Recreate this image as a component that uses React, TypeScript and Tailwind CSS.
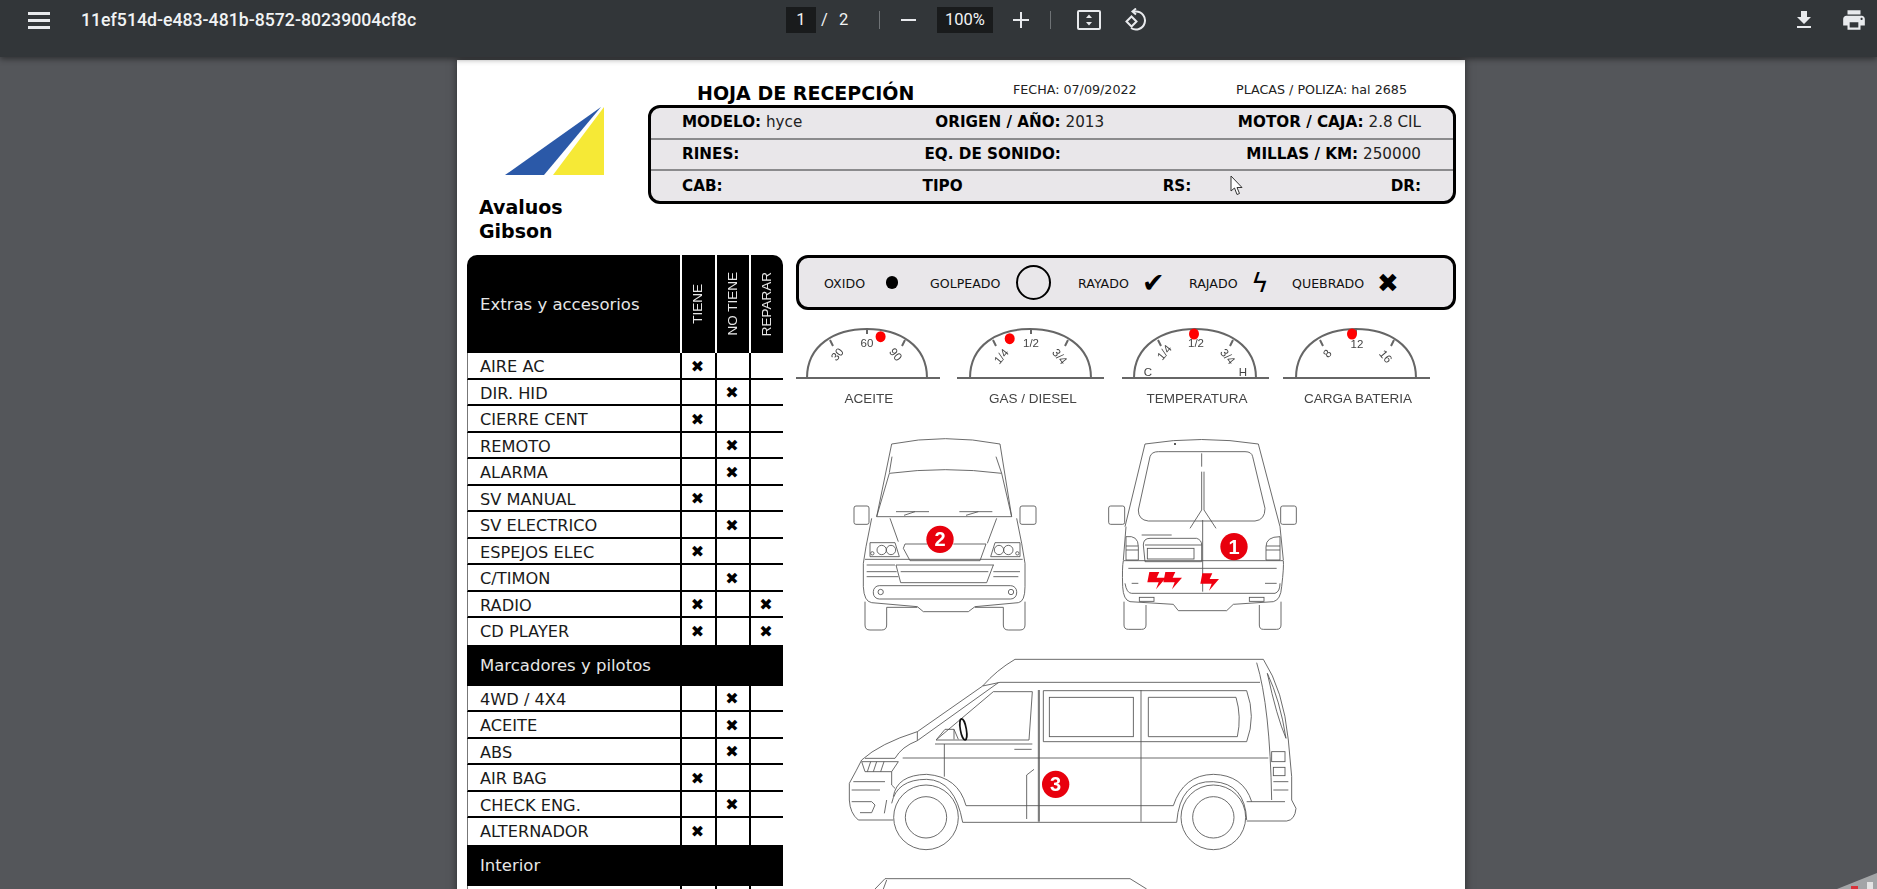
import React from 'react';

const DEJAVU = "font-['DejaVu_Sans',sans-serif]";

type Row = { name: string; marks: [boolean, boolean, boolean] };

const EXTRAS: Row[] = [
  { name: 'AIRE AC', marks: [true, false, false] },
  { name: 'DIR. HID', marks: [false, true, false] },
  { name: 'CIERRE CENT', marks: [true, false, false] },
  { name: 'REMOTO', marks: [false, true, false] },
  { name: 'ALARMA', marks: [false, true, false] },
  { name: 'SV MANUAL', marks: [true, false, false] },
  { name: 'SV ELECTRICO', marks: [false, true, false] },
  { name: 'ESPEJOS ELEC', marks: [true, false, false] },
  { name: 'C/TIMON', marks: [false, true, false] },
  { name: 'RADIO', marks: [true, false, true] },
  { name: 'CD PLAYER', marks: [true, false, true] },
];

const MARCADORES: Row[] = [
  { name: '4WD / 4X4', marks: [false, true, false] },
  { name: 'ACEITE', marks: [false, true, false] },
  { name: 'ABS', marks: [false, true, false] },
  { name: 'AIR BAG', marks: [true, false, false] },
  { name: 'CHECK ENG.', marks: [false, true, false] },
  { name: 'ALTERNADOR', marks: [true, false, false] },
];

const TableRow: React.FC<{ row: Row }> = ({ row }) => (
  <div className="grid grid-cols-[212px_35px_34px_34px] h-[26.5px] border-l border-[#777] border-b-2 border-b-black last:border-b-0">
    <div className="pl-[12px] text-[16.2px] leading-[27px] text-[#1a1a1a] whitespace-nowrap">{row.name}</div>
    {row.marks.map((on, i) => (
      <div key={i} className="border-l-2 border-black flex items-center justify-center pr-[2px] text-[16px] text-black">
        {on ? '✖' : ''}
      </div>
    ))}
  </div>
);

const Band: React.FC<{ title: string }> = ({ title }) => (
  <div className="h-[41px] bg-black pl-[13px] pt-[2px] flex items-center text-[16.5px] text-[#e6e6e6]">{title}</div>
);

const Toolbar: React.FC = () => (
  <div className="relative z-10 h-[57px] bg-[#323639] shadow-[0_2px_6px_rgba(0,0,0,0.45)] flex items-start pt-[7px] text-[#f1f3f4] font-['Roboto',sans-serif] text-[16.5px]">
    <div className="h-[26px] flex items-center ml-[28px] w-[53px]">
      <svg width="22" height="17" viewBox="0 0 22 17" fill="#e8eaed">
        <rect y="0" width="22" height="3" />
        <rect y="7" width="22" height="3" />
        <rect y="14" width="22" height="3" />
      </svg>
    </div>
    <div className="h-[26px] flex items-center w-[705px] text-[17.7px] font-medium whitespace-nowrap">11ef514d-e483-481b-8572-80239004cf8c</div>
    <div className="h-[26px] w-[30px] bg-[#191b1c] flex items-center justify-center">1</div>
    <div className="h-[26px] flex items-center ml-[5px] w-[18px]">/</div>
    <div className="h-[26px] flex items-center w-[40px]">2</div>
    <div className="h-[18px] w-px bg-[#6f7376] mt-[4px]" />
    <div className="h-[26px] flex items-center ml-[21px]">
      <div className="w-[15px] h-[2px] bg-[#e8eaed]" />
    </div>
    <div className="h-[26px] w-[56px] ml-[21px] bg-[#191b1c] flex items-center justify-center">100%</div>
    <div className="h-[26px] flex items-center ml-[20px]">
      <svg width="16" height="16" viewBox="0 0 16 16" fill="#e8eaed">
        <rect x="0" y="7" width="16" height="2" />
        <rect x="7" y="0" width="2" height="16" />
      </svg>
    </div>
    <div className="h-[18px] w-px bg-[#6f7376] mt-[4px] ml-[21px]" />
    <div className="h-[26px] flex items-center ml-[26px]">
      <svg width="24" height="20" viewBox="0 0 24 20" fill="none" stroke="#e8eaed" strokeWidth="2">
        <rect x="1" y="1" width="22" height="18" rx="1" />
        <path d="M12 4.5l3 3.5H9zM12 15.5l3-3.5H9z" fill="#e8eaed" stroke="none" />
      </svg>
    </div>
    <div className="h-[26px] flex items-center ml-[22px]">
      <svg width="24" height="24" viewBox="0 0 24 24" fill="none" stroke="#e8eaed" strokeWidth="2">
        <path d="M7.5 12.5l5-5 5 5-5 5z" transform="translate(-4 1)" />
        <path d="M10 3.5h3a9 9 0 1 1-5 16.5" />
        <path d="M13 0.5L9.5 3.5 13 6.5" />
      </svg>
    </div>
    <div className="h-[26px] flex items-center ml-[645px]">
      <svg width="24" height="26" viewBox="0 0 24 24" fill="#e8eaed">
        <path d="M19 9h-4V3H9v6H5l7 7 7-7zM5 18v2h14v-2H5z" />
      </svg>
    </div>
    <div className="h-[26px] flex items-center ml-[25px]">
      <svg width="26" height="26" viewBox="0 0 24 24" fill="#e8eaed">
        <path d="M19 8H5c-1.66 0-3 1.34-3 3v6h4v4h12v-4h4v-6c0-1.66-1.34-3-3-3zm-3 11H8v-5h8v5zm3-7c-.55 0-1-.45-1-1s.45-1 1-1 1 .45 1 1-.45 1-1 1zm-1-9H6v4h12V3z" />
      </svg>
    </div>
  </div>
);

const Label: React.FC<{ k: string; v?: string; className?: string }> = ({ k, v, className }) => (
  <span className={`whitespace-nowrap ${className ?? ''}`}>
    <b className="font-bold text-black">{k}</b>
    {v ? <span className="text-[#222]"> {v}</span> : null}
  </span>
);

const InfoBox: React.FC = () => (
  <div className="h-[99px] rounded-[12px] border-[3px] border-black bg-[#e9e7ea] text-[15.2px] flex flex-col overflow-hidden">
    <div className="flex-1 flex items-center pl-[31px] pr-[32px] border-b-2 border-[#8b8b8d]">
      <Label k="MODELO:" v="hyce" />
      <Label k="ORIGEN / AÑO:" v="2013" className="ml-[133px]" />
      <Label k="MOTOR / CAJA:" v="2.8 CIL" className="ml-auto" />
    </div>
    <div className="flex-1 flex items-center pl-[31px] pr-[32px] border-b-2 border-[#8b8b8d]">
      <Label k="RINES:" />
      <Label k="EQ. DE SONIDO:" className="ml-[185px]" />
      <Label k="MILLAS / KM:" v="250000" className="ml-auto" />
    </div>
    <div className="flex-1 flex items-center pl-[31px] pr-[32px]">
      <Label k="CAB:" />
      <Label k="TIPO" className="ml-[200px]" />
      <Label k="RS:" className="ml-[200px]" />
      <Label k="DR:" className="ml-auto" />
    </div>
  </div>
);

const Legend: React.FC = () => (
  <div className="h-[55px] rounded-[12px] border-[3px] border-black bg-[#e9e7ea] flex items-center pl-[25px] text-[12.6px] text-[#111]">
    <span className="w-[62px] pt-[3px]">OXIDO</span>
    <span className="w-[12px] h-[13px] rounded-full bg-black" />
    <span className="ml-[32px] w-[86px] pt-[3px]">GOLPEADO</span>
    <span className="w-[35px] h-[35px] rounded-full border-2 border-black" />
    <span className="ml-[27px] w-[64px] pt-[3px]">RAYADO</span>
    <span className="w-[47px] text-[27px] leading-none text-black">✔</span>
    <span className="w-[62px] pt-[3px]">RAJADO</span>
    <span className="w-[41px] text-[27px] leading-none text-black">ϟ</span>
    <span className="w-[85px] pt-[3px]">QUEBRADO</span>
    <span className="text-[26px] leading-none text-black">✖</span>
  </div>
);

const Tick: React.FC<{ x: number; y: number; t: string; r?: number }> = ({ x, y, t, r = 0 }) => (
  <text x={x} y={y} textAnchor="middle" dominantBaseline="middle" fontSize="11.5" fill="#444" transform={`rotate(${r} ${x} ${y})`}>
    {t}
  </text>
);

const Gauges: React.FC = () => (
  <svg width="660" height="90" viewBox="796 320 660 90" className="mt-[10px] font-['Liberation_Sans',sans-serif] blur-[0.5px]">
    <g fill="none" stroke="#666" strokeWidth="2">
      <path d="M794 378H940M807 378C807 345 835 329 867 329S927 345 927 378" />
      <path d="M957 378H1104M970 378C970 345 998 329 1030 329S1091 345 1091 378" />
      <path d="M1122 378H1269M1134 378C1134 345 1163 329 1195 329S1256 345 1256 378" />
      <path d="M1283 378H1430M1296 378C1296 345 1324 329 1356 329S1416 345 1416 378" />
      <path d="M830 340l3 6M867 329v5M905 340l-3 6M993 340l3 6M1031 329v5M1068 340l-3 6M1158 340l3 6M1195 329v5M1233 340l-3 6M1320 340l3 6M1356 329v5M1394 340l-3 6" />
    </g>
    <Tick x={838} y={355} t="30" r={-50} />
    <Tick x={867} y={344} t="60" />
    <Tick x={895} y={355} t="90" r={50} />
    <Tick x={1002} y={357} t="1/4" r={-50} />
    <Tick x={1031} y={344} t="1/2" />
    <Tick x={1059} y={357} t="3/4" r={50} />
    <Tick x={1165} y={353} t="1/4" r={-50} />
    <Tick x={1196} y={344} t="1/2" />
    <Tick x={1227} y={357} t="3/4" r={50} />
    <Tick x={1148} y={373} t="C" />
    <Tick x={1243} y={373} t="H" />
    <Tick x={1328} y={354} t="8" r={-50} />
    <Tick x={1357} y={345} t="12" />
    <Tick x={1385} y={357} t="16" r={50} />
    <g fontSize="13.5" fill="#444" textAnchor="middle">
      <text x={869} y={403}>ACEITE</text>
      <text x={1033} y={403}>GAS / DIESEL</text>
      <text x={1197} y={403}>TEMPERATURA</text>
      <text x={1358} y={403}>CARGA BATERIA</text>
    </g>
    <g fill="#f00">
      <ellipse cx={880.6} cy={336.7} rx={5} ry={5.5} />
      <ellipse cx={1009.7} cy={338.7} rx={5} ry={5.5} />
      <ellipse cx={1194} cy={334} rx={5} ry={5.5} />
      <ellipse cx={1352} cy={334} rx={5} ry={5.5} />
    </g>
  </svg>
);

const Badge: React.FC<{ x: number; y: number; n: string }> = ({ x, y, n }) => (
  <g>
    <circle cx={x} cy={y} r={41} fill="#e8000d" />
    <text x={x} y={y + 21} textAnchor="middle" fontSize="60" fontWeight="700" fill="#fff" fontFamily="Liberation Sans, sans-serif">
      {n}
    </text>
  </g>
);

const BOLT = 'M0 0H30L22 17H50L20 52L28 31H-6Z';

// coordinates are 3x the screen pixels, measured off the crops
const FrontBack: React.FC = () => (
  <svg width="500" height="220" viewBox="0 0 1500 660" className="mt-[10px] ml-[34px] blur-[0.3px]">
    <g fill="none" stroke="#555" strokeWidth="2.6">
      {/* front */}
      <path d="M140 290L185 72Q345 40 510 72L545 290" />
      <path d="M186 110L178 158M498 110L515 160" />
      <path d="M140 290L178 160Q345 138 515 160L545 290Z" />
      <path d="M198 275H297M222 286L255 275M388 275H487M408 286L445 275" />
      <rect x="72" y="258" width="45" height="55" rx="6" />
      <rect x="570" y="258" width="48" height="55" rx="6" />
      <path d="M125 295L108 380L100 430M560 295L575 370L585 430" />
      <path d="M180 295L205 365M500 295L472 370" />
      <path d="M225 372L220 385L240 422H450L468 372M225 372H292M370 372H468" />
      <path d="M120 368H195L208 410H120Z" />
      <path d="M570 368H495L482 410H570Z" />
      <circle cx="155" cy="390" r="14" />
      <circle cx="183" cy="390" r="14" />
      <circle cx="127" cy="400" r="5" />
      <circle cx="507" cy="390" r="14" />
      <circle cx="535" cy="390" r="14" />
      <circle cx="562" cy="400" r="5" />
      <path d="M105 418H578M110 435H195M110 455H200M110 470H205M198 435H492M198 435L212 488H470L490 435M212 455H475M490 455H570M490 470H565" />
      <path d="M100 430V500Q102 545 125 548L262 560L280 575H415L435 560L565 548Q585 545 585 500V430" />
      <rect x="130" y="497" width="430" height="40" rx="18" />
      <circle cx="152" cy="516" r="8" />
      <circle cx="543" cy="516" r="8" />
      <path d="M105 545V615Q105 630 120 630H155Q170 630 170 615V562H262M520 562V615Q520 630 535 630H570Q585 630 585 615V545M435 562H520" />
      {/* back */}
      <path d="M885 320L945 72Q1115 45 1285 72L1350 320" />
      <path d="M925 270L960 110Q965 95 985 95H1245Q1265 95 1268 110L1305 265Q1305 300 1275 303H955Q925 300 925 270Z" />
      <path d="M1115 100V140M1115 155V270L1080 325M1122 155V270L1158 325M1118 300V515" />
      <rect x="836" y="258" width="48" height="55" rx="6" />
      <rect x="1352" y="258" width="47" height="55" rx="6" />
      <path d="M888 320L880 420M1350 320L1360 420" />
      <path d="M888 350Q925 345 925 380V420H888ZM888 378H925M888 390H925" />
      <path d="M1350 350Q1308 350 1308 380V420H1350ZM1308 378H1350M1308 390H1350" />
      <path d="M940 375Q940 355 960 355H1100Q1115 360 1115 375V425H945ZM945 375H1115M935 345H1025" />
      <rect x="952" y="385" width="140" height="32" />
      <path d="M880 422H1360Q1362 440 1355 500Q1352 540 1330 545L1210 553L1190 572H1045L1030 553L900 545Q880 540 878 500Q876 440 880 422Z" />
      <path d="M885 490Q890 520 905 520H1335Q1350 515 1350 490M895 445H1340M905 490H925M1305 490H1340" />
      <rect x="928" y="532" width="44" height="12" />
      <rect x="1258" y="532" width="44" height="12" />
      <path d="M882 545V615Q882 628 895 628H935Q948 628 948 615V555M1288 555V615Q1288 628 1300 628H1340Q1353 628 1353 615V545" />
    </g>
    <circle cx="1035" cy="72" r="3" fill="#222" />
    <g fill="#f00010">
      <path d={BOLT} transform="translate(958 456)" />
      <path d={BOLT} transform="translate(1006 456)" />
      <path d={BOLT} transform="translate(1117 460)" />
    </g>
    <Badge x={330} y={358} n="2" />
    <Badge x={1212} y={380} n="1" />
  </svg>
);

const Side: React.FC = () => (
  <svg width="500" height="249" viewBox="0 0 1500 747" className="ml-[34px] blur-[0.3px]">
    <g fill="none" stroke="#555" strokeWidth="2.6">
      <path d="M458 138Q500 90 555 58H1300Q1360 150 1375 300L1385 410V480L1398 505Q1395 540 1370 543H1250" />
      <path d="M458 138L510 127H1290" />
      <path d="M262 275L458 138M262 302L505 128M262 275V302" />
      <path d="M262 275Q150 310 95 360Q80 390 58 430V480Q60 520 85 540H190" />
      <path d="M262 302Q215 320 195 355H105" />
      <path d="M95 365H205L185 395H105ZM122 365L112 395M140 365L130 395M162 365L152 395" />
      <path d="M70 425H165M65 450H150M65 485H125L135 495L125 518H90M185 395V435L195 445M170 480L163 520" />
      <path d="M318 300L490 155H607L597 300ZM315 312H607" />
      <path d="M320 298L345 268H372L385 298M372 268V298" />
      <path d="M343 312V410M218 354H1315M553 328H605" />
      <path d="M625 150V545M628 150V545M933 150V545" />
      <path d="M640 152H1250Q1278 230 1250 305H640Z" />
      <rect x="658" y="172" width="252" height="118" />
      <path d="M955 172H1218Q1235 230 1222 290H955Z" />
      <path d="M590 537V405L612 388" />
      <rect x="1325" y="335" width="40" height="30" />
      <rect x="1330" y="382" width="35" height="25" />
      <path d="M1330 425H1375M1330 450H1375" />
      <path d="M1280 68Q1320 200 1325 480" />
      <path d="M1312 100Q1350 180 1368 295Q1340 230 1312 100Z" />
      <circle cx="288" cy="532" r="97" />
      <circle cx="288" cy="532" r="62" />
      <circle cx="1150" cy="532" r="97" />
      <circle cx="1150" cy="532" r="62" />
      <path d="M190 470Q200 405 290 403Q385 410 408 497H1030Q1060 405 1150 403Q1240 405 1265 485" />
      <path d="M185 490Q200 418 290 418Q375 420 398 547H1040Q1050 420 1150 425Q1245 430 1250 540" />
      <path d="M1250 485H1365" />
      <path d="M135 747L165 716H900L950 747M170 720L160 747" />
    </g>
    <ellipse cx="400" cy="268" rx="9" ry="32" fill="none" stroke="#111" strokeWidth="5" transform="rotate(-10 400 268)" />
    <Badge x={677} y={433} n="3" />
  </svg>
);

const App: React.FC = () => {
  return (
    <div className="relative w-[1877px] h-[889px] overflow-hidden bg-[#54565a]">
      <Toolbar />
      <div className={`mt-[3px] ml-[457px] w-[1008px] h-[900px] bg-white shadow-[0_0_8px_rgba(0,0,0,0.5)] ${DEJAVU}`}>
        <div className="flex h-[195px] pl-[10px] pr-[9px]">
          <div className="w-[181px]">
            <svg width="100" height="69" viewBox="0 0 100 69" className="mt-[47px] ml-[38px]">
              <polygon points="96,0 0,68 39,68" fill="#2b59a8" />
              <polygon points="99,0 48,68 99,68" fill="#f6e936" />
            </svg>
            <div className="mt-[19px] ml-[12px] text-[19px] leading-[24px] font-bold text-black">
              Avaluos
              <br />
              Gibson
            </div>
          </div>
          <div className="w-[808px]">
            <div className="h-[45px] flex pt-[20px] text-[12.7px] text-[#222]">
              <div className="w-[365px] pl-[49px] text-[19px] font-bold text-black leading-[26px] whitespace-nowrap">HOJA DE RECEPCIÓN</div>
              <div className="w-[223px] leading-[20px]">FECHA: 07/09/2022</div>
              <div className="leading-[20px] whitespace-nowrap">PLACAS / POLIZA: hal 2685</div>
            </div>
            <InfoBox />
          </div>
        </div>
        <div className="flex pl-[10px]">
          <div className="w-[316px] overflow-hidden">
            <div className="grid grid-cols-[213px_35px_34px_34px] h-[98px] bg-black rounded-t-[10px] text-[#e6e6e6]">
              <div className="pl-[13px] pt-[2px] flex items-center text-[16.5px]">Extras y accesorios</div>
              {['TIENE', 'NO TIENE', 'REPARAR'].map((t) => (
                <div key={t} className="border-l-2 border-white flex items-center justify-center">
                  <span className="[writing-mode:vertical-rl] rotate-180 font-['Liberation_Sans',sans-serif] text-[13.5px] whitespace-nowrap">{t}</span>
                </div>
              ))}
            </div>
            <div>
              {EXTRAS.map((r) => (
                <TableRow key={r.name} row={r} />
              ))}
            </div>
            <Band title="Marcadores y pilotos" />
            <div>
              {MARCADORES.map((r) => (
                <TableRow key={r.name} row={r} />
              ))}
            </div>
            <Band title="Interior" />
            <TableRow row={{ name: 'TAB. PUERTAS', marks: [true, false, false] }} />
          </div>
          <div className="ml-[13px] w-[660px]">
            <Legend />
            <Gauges />
            <FrontBack />
            <Side />
          </div>
        </div>
      </div>
      {/* mouse pointer caught by the capture */}
      <svg width="14" height="21" viewBox="0 0 14 21" className="absolute left-[1230px] top-[175px]">
        <path d="M1 1V16L4.5 13L7 19.5L9.5 18.5L7 12.5H12Z" fill="#fff" stroke="#333" strokeWidth="1" />
      </svg>
      {/* corner of another window at the bottom right */}
      <svg width="40" height="16" viewBox="0 0 40 16" className="absolute right-0 bottom-0">
        <polygon points="0,16 40,0 40,16" fill="#a3a5a7" />
        <rect x="14" y="13" width="7" height="3" fill="#d9323a" />
        <rect x="30" y="9" width="6" height="7" fill="#e4e4e4" />
      </svg>
    </div>
  );
};

export default App;
